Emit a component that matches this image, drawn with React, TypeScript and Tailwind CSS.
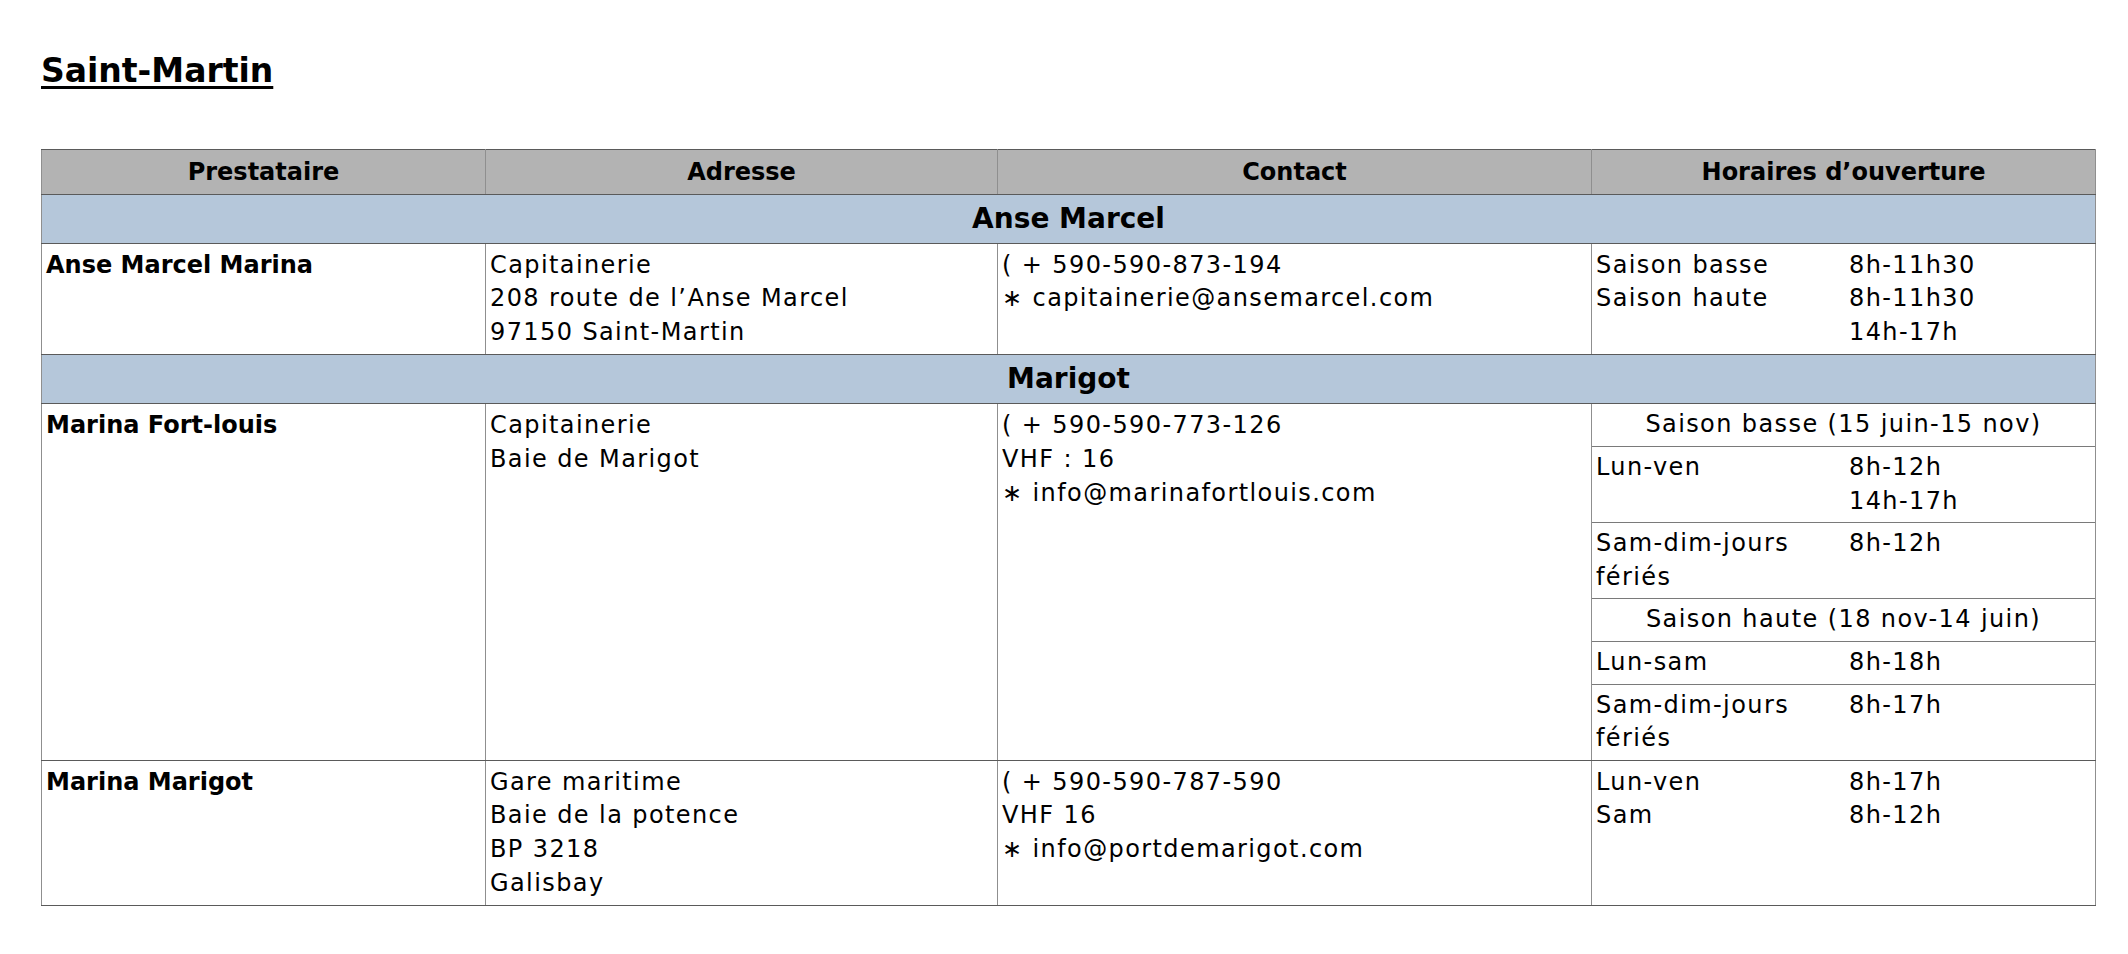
import React from 'react';

const cell = 'border-x border-y border-x-[#8f8f8f] border-y-[#5a5a5a] px-[4px] py-[5px] align-top';
const reg = 'tracking-[1.4px]';

const Lines = ({ lines }: { lines: string[] }) => (
  <div className={reg}>
    {lines.map((l, i) => (
      <div key={i}>{l}</div>
    ))}
  </div>
);

const Hours = ({ rows }: { rows: [string[], string[]][] }) => (
  <div className={reg}>
    {rows.map(([label, times], i) => (
      <div key={i} className="grid grid-cols-[253px_1fr]">
        <div>
          {label.map((l, j) => (
            <div key={j}>{l}</div>
          ))}
        </div>
        <div>
          {times.map((t, j) => (
            <div key={j}>{t}</div>
          ))}
        </div>
      </div>
    ))}
  </div>
);

const GroupRow = ({ name }: { name: string }) => (
  <tr>
    <td
      colSpan={4}
      className="border-y border-x border-y-[#5a5a5a] border-x-[#8f8f8f] bg-[#b5c7da] py-[5px] text-center text-[28px] font-bold leading-[38px]"
    >
      {name}
    </td>
  </tr>
);

const SubRow = ({ children, last }: { children: React.ReactNode; last?: boolean }) => (
  <div className={`px-[4px] py-[4px] ${last ? '' : 'border-b border-[#7a7a7a]'}`}>{children}</div>
);

export default function App() {
  return (
    <div className="min-h-screen bg-white pl-[41px] pt-[51px] font-['DejaVu_Sans',sans-serif] text-black">
      <h1 className="text-[33px] font-bold leading-[40px] underline decoration-[3px] underline-offset-[4px]">
        Saint-Martin
      </h1>

      <table className="mt-[58px] w-[2054px] table-fixed border-collapse text-[24px] leading-[33.6px]">
        <colgroup>
          <col className="w-[444px]" />
          <col className="w-[512px]" />
          <col className="w-[594px]" />
          <col className="w-[504px]" />
        </colgroup>
        <thead>
          <tr className="bg-[#b3b3b3] font-bold">
            <th className={`${cell} pt-[6px] pb-[4px] text-center`}>Prestataire</th>
            <th className={`${cell} pt-[6px] pb-[4px] text-center`}>Adresse</th>
            <th className={`${cell} pt-[6px] pb-[4px] text-center`}>Contact</th>
            <th className={`${cell} pt-[6px] pb-[4px] text-center`}>Horaires d’ouverture</th>
          </tr>
        </thead>
        <tbody>
          <GroupRow name="Anse Marcel" />
          <tr>
            <td className={`${cell} font-bold`}>Anse Marcel Marina</td>
            <td className={cell}>
              <Lines lines={['Capitainerie', '208 route de l’Anse Marcel', '97150 Saint-Martin']} />
            </td>
            <td className={cell}>
              <Lines lines={['( + 590-590-873-194', '∗ capitainerie@ansemarcel.com']} />
            </td>
            <td className={cell}>
              <Hours
                rows={[
                  [['Saison basse'], ['8h-11h30']],
                  [['Saison haute'], ['8h-11h30', '14h-17h']],
                ]}
              />
            </td>
          </tr>

          <GroupRow name="Marigot" />
          <tr>
            <td className={`${cell} font-bold`}>Marina Fort-louis</td>
            <td className={cell}>
              <Lines lines={['Capitainerie', 'Baie de Marigot']} />
            </td>
            <td className={cell}>
              <Lines lines={['( + 590-590-773-126', 'VHF : 16', '∗ info@marinafortlouis.com']} />
            </td>
            <td className="border-x border-y border-x-[#8f8f8f] border-y-[#5a5a5a] p-0 align-top">
              <SubRow>
                <div className={`${reg} text-center`}>Saison basse (15 juin-15 nov)</div>
              </SubRow>
              <SubRow>
                <Hours rows={[[['Lun-ven'], ['8h-12h', '14h-17h']]]} />
              </SubRow>
              <SubRow>
                <Hours rows={[[['Sam-dim-jours', 'fériés'], ['8h-12h']]]} />
              </SubRow>
              <SubRow>
                <div className={`${reg} text-center`}>Saison haute (18 nov-14 juin)</div>
              </SubRow>
              <SubRow>
                <Hours rows={[[['Lun-sam'], ['8h-18h']]]} />
              </SubRow>
              <SubRow last>
                <Hours rows={[[['Sam-dim-jours', 'fériés'], ['8h-17h']]]} />
              </SubRow>
            </td>
          </tr>

          <tr>
            <td className={`${cell} font-bold`}>Marina Marigot</td>
            <td className={cell}>
              <Lines lines={['Gare maritime', 'Baie de la potence', 'BP 3218', 'Galisbay']} />
            </td>
            <td className={cell}>
              <Lines lines={['( + 590-590-787-590', 'VHF 16', '∗ info@portdemarigot.com']} />
            </td>
            <td className={cell}>
              <Hours
                rows={[
                  [['Lun-ven'], ['8h-17h']],
                  [['Sam'], ['8h-12h']],
                ]}
              />
            </td>
          </tr>
        </tbody>
      </table>
    </div>
  );
}
